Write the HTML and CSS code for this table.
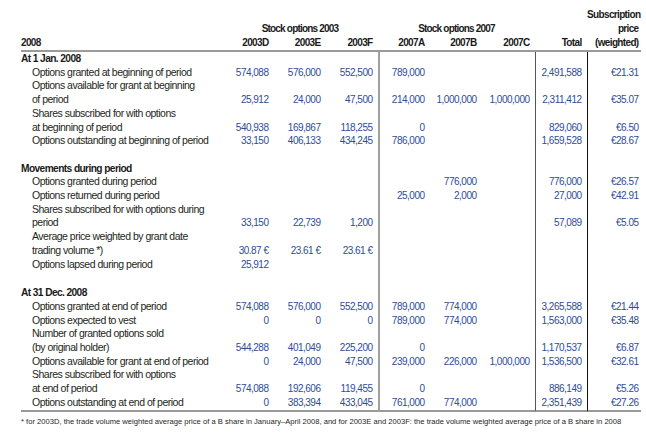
FILE: index.html
```html
<!DOCTYPE html>
<html>
<head>
<meta charset="utf-8">
<link rel="stylesheet" href="styles.css">
</head>
<body>
<div class="page">
<table class="opts">
<colgroup>
<col class="c-label"><col class="c-num"><col class="c-num"><col class="c-num"><col class="c-num"><col class="c-num"><col class="c-num7"><col class="c-num"><col class="c-sub">
</colgroup>
<thead>
<tr class="h1"><th></th><th colspan="3"></th><th colspan="3"></th><th></th><th class="r sub">Subscription</th></tr>
<tr class="h2"><th></th><th colspan="3" class="grp">Stock options 2003</th><th colspan="3" class="grp">Stock options 2007</th><th></th><th class="r sub">price</th></tr>
<tr class="h3"><th class="l">2008</th><th class="r">2003D</th><th class="r">2003E</th><th class="r">2003F</th><th class="r">2007A</th><th class="r">2007B</th><th class="r">2007C</th><th class="r">Total</th><th class="r sub w">(weighted)</th></tr>
</thead>
<tbody>
<tr class="sec"><td>At 1 Jan. 2008</td><td></td><td></td><td></td><td class="b1"></td><td></td><td></td><td class="b2"></td><td class="b3"></td></tr>
<tr><td class="lab">Options granted at beginning of period</td><td>574,088</td><td>576,000</td><td>552,500</td><td class="b1">789,000</td><td></td><td></td><td class="b2">2,491,588</td><td class="b3">€21.31</td></tr>
<tr><td class="lab">Options available for grant at beginning</td><td></td><td></td><td></td><td class="b1"></td><td></td><td></td><td class="b2"></td><td class="b3"></td></tr>
<tr><td class="lab">of period</td><td>25,912</td><td>24,000</td><td>47,500</td><td class="b1">214,000</td><td>1,000,000</td><td>1,000,000</td><td class="b2">2,311,412</td><td class="b3">€35.07</td></tr>
<tr><td class="lab">Shares subscribed for with options</td><td></td><td></td><td></td><td class="b1"></td><td></td><td></td><td class="b2"></td><td class="b3"></td></tr>
<tr><td class="lab">at beginning of period</td><td>540,938</td><td>169,867</td><td>118,255</td><td class="b1">0</td><td></td><td></td><td class="b2">829,060</td><td class="b3">€6.50</td></tr>
<tr><td class="lab">Options outstanding at beginning of period</td><td>33,150</td><td>406,133</td><td>434,245</td><td class="b1">786,000</td><td></td><td></td><td class="b2">1,659,528</td><td class="b3">€28.67</td></tr>
<tr><td></td><td></td><td></td><td></td><td class="b1"></td><td></td><td></td><td class="b2"></td><td class="b3"></td></tr>
<tr class="sec"><td>Movements during period</td><td></td><td></td><td></td><td class="b1"></td><td></td><td></td><td class="b2"></td><td class="b3"></td></tr>
<tr><td class="lab">Options granted during period</td><td></td><td></td><td></td><td class="b1"></td><td>776,000</td><td></td><td class="b2">776,000</td><td class="b3">€26.57</td></tr>
<tr><td class="lab">Options returned during period</td><td></td><td></td><td></td><td class="b1">25,000</td><td>2,000</td><td></td><td class="b2">27,000</td><td class="b3">€42.91</td></tr>
<tr><td class="lab">Shares subscribed for with options during</td><td></td><td></td><td></td><td class="b1"></td><td></td><td></td><td class="b2"></td><td class="b3"></td></tr>
<tr><td class="lab">period</td><td>33,150</td><td>22,739</td><td>1,200</td><td class="b1"></td><td></td><td></td><td class="b2">57,089</td><td class="b3">€5.05</td></tr>
<tr><td class="lab">Average price weighted by grant date</td><td></td><td></td><td></td><td class="b1"></td><td></td><td></td><td class="b2"></td><td class="b3"></td></tr>
<tr><td class="lab">trading volume *)</td><td>30.87 €</td><td>23.61 €</td><td>23.61 €</td><td class="b1"></td><td></td><td></td><td class="b2"></td><td class="b3"></td></tr>
<tr><td class="lab">Options lapsed during period</td><td>25,912</td><td></td><td></td><td class="b1"></td><td></td><td></td><td class="b2"></td><td class="b3"></td></tr>
<tr><td></td><td></td><td></td><td></td><td class="b1"></td><td></td><td></td><td class="b2"></td><td class="b3"></td></tr>
<tr class="sec tall"><td>At 31 Dec. 2008</td><td></td><td></td><td></td><td class="b1"></td><td></td><td></td><td class="b2"></td><td class="b3"></td></tr>
<tr><td class="lab">Options granted at end of period</td><td>574,088</td><td>576,000</td><td>552,500</td><td class="b1">789,000</td><td>774,000</td><td></td><td class="b2">3,265,588</td><td class="b3">€21.44</td></tr>
<tr><td class="lab">Options expected to vest</td><td>0</td><td>0</td><td>0</td><td class="b1">789,000</td><td>774,000</td><td></td><td class="b2">1,563,000</td><td class="b3">€35.48</td></tr>
<tr><td class="lab">Number of granted options sold</td><td></td><td></td><td></td><td class="b1"></td><td></td><td></td><td class="b2"></td><td class="b3"></td></tr>
<tr><td class="lab">(by original holder)</td><td>544,288</td><td>401,049</td><td>225,200</td><td class="b1">0</td><td></td><td></td><td class="b2">1,170,537</td><td class="b3">€6.87</td></tr>
<tr><td class="lab">Options available for grant at end of period</td><td>0</td><td>24,000</td><td>47,500</td><td class="b1">239,000</td><td>226,000</td><td>1,000,000</td><td class="b2">1,536,500</td><td class="b3">€32.61</td></tr>
<tr><td class="lab">Shares subscribed for with options</td><td></td><td></td><td></td><td class="b1"></td><td></td><td></td><td class="b2"></td><td class="b3"></td></tr>
<tr><td class="lab">at end of period</td><td>574,088</td><td>192,606</td><td>119,455</td><td class="b1">0</td><td></td><td></td><td class="b2">886,149</td><td class="b3">€5.26</td></tr>
<tr class="last"><td class="lab">Options outstanding at end of period</td><td>0</td><td>383,394</td><td>433,045</td><td class="b1">761,000</td><td>774,000</td><td></td><td class="b2">2,351,439</td><td class="b3">€27.26</td></tr>
</tbody>
</table>
<p class="note">* for 2003D, the trade volume weighted average price of a B share in January–April 2008, and for 2003E and 2003F: the trade volume weighted average price of a B share in 2008</p>
</div>
</body>
</html>
```

FILE: styles.css
```css
html, body {
  margin: 0;
  padding: 0;
  background: #ffffff;
}
body {
  font-family: "Liberation Sans", Arial, sans-serif;
  color: #231f20;
}
.page {
  padding: 8px 0 0 21px;
}
.opts {
  table-layout: fixed;
  width: 620px;
  border-collapse: separate;
  border-spacing: 0;
}
.c-label { width: 201px; }
.c-num { width: 52px; }
.c-num7 { width: 53px; }
.c-sub { width: 54px; }

.opts th {
  font-weight: bold;
  font-size: 10px;
  letter-spacing: -0.65px;
  line-height: 14px;
  height: 14px;
  padding: 0 5.5px 0 0;
  white-space: nowrap;
  color: #1a1a1a;
}
.opts th.l { text-align: left; }
.opts th.r { text-align: right; }
.opts th.grp { text-align: center; padding: 0; letter-spacing: -0.8px; }
.opts th.sub { padding-right: 2.5px; }
.opts .h3 th {
  border-bottom: 2px solid #9a9a9a;
}

.opts td {
  font-size: 10px;
  letter-spacing: -0.5px;
  line-height: 13.7px;
  height: 13.7px;
  padding: 0 5.5px 0 0;
  text-align: right;
  white-space: nowrap;
  color: #2d4c98;
}
.opts td:first-child {
  text-align: left;
  padding: 0;
  color: #231f20;
}
.opts td.lab {
  padding-left: 11px;
  font-size: 10.5px;
  letter-spacing: -0.5px;
}
.opts .sec td:first-child {
  font-weight: bold;
  font-size: 10.2px;
  letter-spacing: -0.6px;
  color: #1a1a1a;
}
.opts .tall td {
  height: 15px;
  line-height: 15px;
}
.opts td.b1 { border-left: 2px solid #a0a0a0; }
.opts td.b2 { border-left: 1px solid #555555; }
.opts td.b3 { border-left: 1px solid #111111; padding-right: 2.5px; }
.opts .last td {
  border-bottom: 2px solid #9a9a9a;
}
.note {
  margin: 5px 0 0 0;
  font-size: 7.6px;
  line-height: 10px;
  color: #231f20;
  white-space: nowrap;
}
```
